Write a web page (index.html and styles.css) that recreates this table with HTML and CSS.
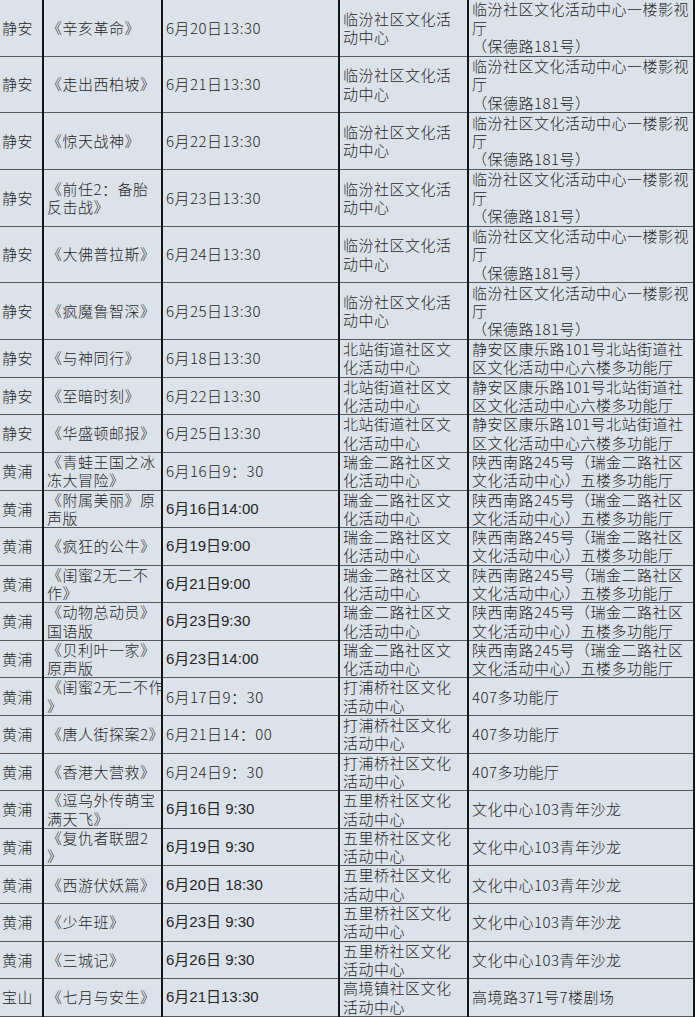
FILE: index.html
```html
<!DOCTYPE html>
<html lang="zh-CN">
<head>
<meta charset="utf-8">
<title>社区电影放映安排</title>
<link rel="stylesheet" href="styles.css">
</head>
<body>
<table class="sched">
<colgroup>
<col class="c1"><col class="c2"><col class="c3"><col class="c4"><col class="c5">
</colgroup>
<tbody>
<tr class="r3"><td>静安</td><td>《辛亥革命》</td><td>6月20日13:30</td><td>临汾社区文化活<br>动中心</td><td>临汾社区文化活动中心一楼影视<br>厅<br>（保德路181号）</td></tr>
<tr class="r3"><td>静安</td><td>《走出西柏坡》</td><td>6月21日13:30</td><td>临汾社区文化活<br>动中心</td><td>临汾社区文化活动中心一楼影视<br>厅<br>（保德路181号）</td></tr>
<tr class="r3"><td>静安</td><td>《惊天战神》</td><td>6月22日13:30</td><td>临汾社区文化活<br>动中心</td><td>临汾社区文化活动中心一楼影视<br>厅<br>（保德路181号）</td></tr>
<tr class="r3"><td>静安</td><td>《前任2：备胎<br>反击战》</td><td>6月23日13:30</td><td>临汾社区文化活<br>动中心</td><td>临汾社区文化活动中心一楼影视<br>厅<br>（保德路181号）</td></tr>
<tr class="r3"><td>静安</td><td>《大佛普拉斯》</td><td>6月24日13:30</td><td>临汾社区文化活<br>动中心</td><td>临汾社区文化活动中心一楼影视<br>厅<br>（保德路181号）</td></tr>
<tr class="r3"><td>静安</td><td>《疯魔鲁智深》</td><td>6月25日13:30</td><td>临汾社区文化活<br>动中心</td><td>临汾社区文化活动中心一楼影视<br>厅<br>（保德路181号）</td></tr>
<tr class="r2"><td>静安</td><td>《与神同行》</td><td>6月18日13:30</td><td>北站街道社区文<br>化活动中心</td><td>静安区康乐路101号北站街道社<br>区文化活动中心六楼多功能厅</td></tr>
<tr class="r2"><td>静安</td><td>《至暗时刻》</td><td>6月22日13:30</td><td>北站街道社区文<br>化活动中心</td><td>静安区康乐路101号北站街道社<br>区文化活动中心六楼多功能厅</td></tr>
<tr class="r2"><td>静安</td><td>《华盛顿邮报》</td><td>6月25日13:30</td><td>北站街道社区文<br>化活动中心</td><td>静安区康乐路101号北站街道社<br>区文化活动中心六楼多功能厅</td></tr>
<tr class="r2"><td>黄浦</td><td>《青蛙王国之冰<br>冻大冒险》</td><td>6月16日9：30</td><td>瑞金二路社区文<br>化活动中心</td><td>陕西南路245号（瑞金二路社区<br>文化活动中心）五楼多功能厅</td></tr>
<tr class="r2"><td>黄浦</td><td>《附属美丽》原<br>声版</td><td class="sans">6月16日14:00</td><td>瑞金二路社区文<br>化活动中心</td><td>陕西南路245号（瑞金二路社区<br>文化活动中心）五楼多功能厅</td></tr>
<tr class="r2"><td>黄浦</td><td>《疯狂的公牛》</td><td class="sans">6月19日9:00</td><td>瑞金二路社区文<br>化活动中心</td><td>陕西南路245号（瑞金二路社区<br>文化活动中心）五楼多功能厅</td></tr>
<tr class="r2"><td>黄浦</td><td>《闺蜜2无二不<br>作》</td><td class="sans">6月21日9:00</td><td>瑞金二路社区文<br>化活动中心</td><td>陕西南路245号（瑞金二路社区<br>文化活动中心）五楼多功能厅</td></tr>
<tr class="r2"><td>黄浦</td><td>《动物总动员》<br>国语版</td><td class="sans">6月23日9:30</td><td>瑞金二路社区文<br>化活动中心</td><td>陕西南路245号（瑞金二路社区<br>文化活动中心）五楼多功能厅</td></tr>
<tr class="r2"><td>黄浦</td><td>《贝利叶一家》<br>原声版</td><td class="sans">6月23日14:00</td><td>瑞金二路社区文<br>化活动中心</td><td>陕西南路245号（瑞金二路社区<br>文化活动中心）五楼多功能厅</td></tr>
<tr class="r2"><td>黄浦</td><td>《闺蜜2无二不作<br>》</td><td>6月17日9：30</td><td>打浦桥社区文化<br>活动中心</td><td>407多功能厅</td></tr>
<tr class="r2"><td>黄浦</td><td>《唐人街探案2》</td><td>6月21日14：00</td><td>打浦桥社区文化<br>活动中心</td><td>407多功能厅</td></tr>
<tr class="r2"><td>黄浦</td><td>《香港大营救》</td><td>6月24日9：30</td><td>打浦桥社区文化<br>活动中心</td><td>407多功能厅</td></tr>
<tr class="r2"><td>黄浦</td><td>《逗乌外传萌宝<br>满天飞》</td><td class="sans">6月16日 9:30</td><td>五里桥社区文化<br>活动中心</td><td>文化中心103青年沙龙</td></tr>
<tr class="r2"><td>黄浦</td><td>《复仇者联盟2<br>》</td><td class="sans">6月19日 9:30</td><td>五里桥社区文化<br>活动中心</td><td>文化中心103青年沙龙</td></tr>
<tr class="r2"><td>黄浦</td><td>《西游伏妖篇》</td><td class="sans">6月20日 18:30</td><td>五里桥社区文化<br>活动中心</td><td>文化中心103青年沙龙</td></tr>
<tr class="r2"><td>黄浦</td><td>《少年班》</td><td class="sans">6月23日 9:30</td><td>五里桥社区文化<br>活动中心</td><td>文化中心103青年沙龙</td></tr>
<tr class="r2"><td>黄浦</td><td>《三城记》</td><td class="sans">6月26日 9:30</td><td>五里桥社区文化<br>活动中心</td><td>文化中心103青年沙龙</td></tr>
<tr class="r2"><td>宝山</td><td>《七月与安生》</td><td class="sans">6月21日13:30</td><td>高境镇社区文化<br>活动中心</td><td>高境路371号7楼剧场</td></tr>
</tbody>
</table>
</body>
</html>
```
FILE: styles.css
```css
html, body {
  margin: 0;
  padding: 0;
  background: #ffffff;
}

.sched {
  border-collapse: collapse;
  table-layout: fixed;
  width: 694px;
  background: #dce2ea;
  color: #262626;
  font-family: "Noto Sans CJK SC", "Noto Sans", sans-serif;
  font-weight: 300;
  font-size: 15px;
  letter-spacing: 0.5px;
  margin-top: -1px;
}

.c1 { width: 43px; }
.c2 { width: 119px; }
.c3 { width: 177px; }
.c4 { width: 129px; }
.c5 { width: 226px; }

.sched td {
  padding: 0 0 0 3px;
  line-height: 18.3px;
  vertical-align: middle;
  white-space: nowrap;
  overflow: hidden;
  border-top: 1px solid #55595e;
  border-bottom: 1px solid #55595e;
  border-left: 2px solid #151515;
  border-right: 2px solid #151515;
}

.sched td:first-child {
  border-left: none;
  padding-left: 2px;
}

.r3 td { height: 55.7px; }
.r2 td { height: 36.6px; }

.sched td.sans {
  font-family: "Liberation Sans", "Noto Sans CJK SC", sans-serif;
  font-weight: 400;
  letter-spacing: 0;
}
```
